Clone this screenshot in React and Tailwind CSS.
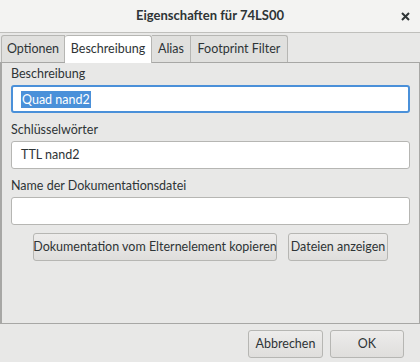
import React from 'react';

const font = { fontFamily: 'Lato, "Noto Sans", sans-serif' };

const Field = ({ label, value, focused }) => (
  <div className="flex flex-col">
    <label className="text-[12.5px] leading-[16px] text-[#2e3436] mb-[3px] h-[16px]">{label}</label>
    <div
      className={`h-[28px] rounded-[3px] bg-white flex items-center text-[12.5px] text-[#2e3436] ${
        focused ? 'border-2 border-[#4a90d9] px-[8px]' : 'border border-[#b6b6b3] px-[9px]'
      }`}
    >
      {value && (focused ? (
        <span className="bg-[#4a90d9] text-white leading-[17px] px-[1px]">{value}</span>
      ) : (
        <span>{value}</span>
      ))}
    </div>
  </div>
);

const Btn = ({ children, className = '' }) => (
  <button
    className={`h-[28px] whitespace-nowrap rounded-[3px] border border-[#b6b6b3] bg-gradient-to-b from-[#edeceb] to-[#dfdedc] text-[12.5px] text-[#2e3436] flex items-center justify-center ${className}`}
  >
    {children}
  </button>
);

const tab = 'h-[27px] flex items-center justify-center text-[12.5px] text-[#2e3436] border-t border-r border-[#b6b6b3]';

export default function App() {
  return (
    <div className="w-[420px] h-[362px] bg-[#e8e8e7] flex flex-col overflow-hidden" style={font}>
      {/* title bar */}
      <div className="h-[33px] shrink-0 bg-[#f3f3f2] border-b border-[#bfbfbc] flex items-center relative">
        <div className="flex-1 text-center text-[13px] font-bold text-[#2e3436]">Eigenschaften für 74LS00</div>
        <svg className="absolute right-[10px] top-[12px]" width="9" height="9" viewBox="0 0 9 9">
          <path d="M1 1 L8 8 M8 1 L1 8" stroke="#2e3436" strokeWidth="2" />
        </svg>
      </div>

      {/* tabs */}
      <div className="h-[28px] shrink-0 flex items-end pl-[1px] mt-[1px]">
        <div className={`${tab} w-[64px] border-l bg-[#e0e0de] rounded-tl-[3px]`}>Optionen</div>
        <div className="h-[28px] w-[87px] border border-b-0 border-l-0 border-[#b6b6b3] bg-white flex items-center justify-center text-[12.5px] text-[#2e3436] rounded-t-[3px] -mb-[1px] relative z-10">Beschreibung</div>
        <div className={`${tab} w-[39px] bg-[#e0e0de]`}>Alias</div>
        <div className={`${tab} w-[97px] bg-[#e0e0de] rounded-tr-[3px]`}>Footprint Filter</div>
      </div>

      {/* panel */}
      <div className="h-[262px] shrink-0 border border-[#a7a7a5] border-l-2 bg-[#e8e8e7] flex flex-col px-[9px] pt-[3px] gap-[9px]">
        <Field label="Beschreibung" value="Quad nand2" focused />
        <Field label="Schlüsselwörter" value="TTL nand2" />
        <Field label="Name der Dokumentationsdatei" value="" />
        <div className="flex justify-center gap-[11px] -mt-[1px]">
          <Btn className="w-[244px]">Dokumentation vom Elternelement kopieren</Btn>
          <Btn className="w-[100px]">Dateien anzeigen</Btn>
        </div>
      </div>

      {/* footer */}
      <div className="flex justify-end gap-[7px] pr-[16px] pt-[6px]">
        <Btn className="w-[75px]">Abbrechen</Btn>
        <Btn className="w-[74px]">OK</Btn>
      </div>
    </div>
  );
}
